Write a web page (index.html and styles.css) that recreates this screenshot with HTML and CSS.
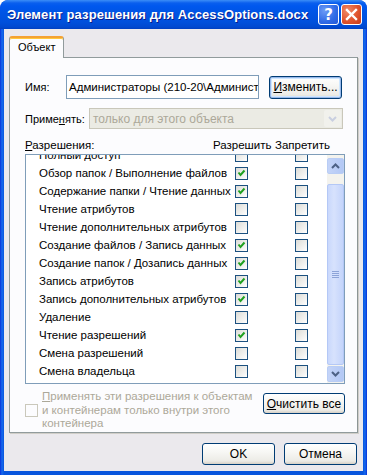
FILE: index.html
```html
<!DOCTYPE html>
<html lang="ru">
<head>
<meta charset="utf-8">
<title>Элемент разрешения</title>
<link rel="stylesheet" href="styles.css">
</head>
<body>
<div class="window">
  <div class="titlebar">
    <span class="title">Элемент разрешения для AccessOptions.docx</span>
    <div class="tb-buttons">
      <span class="tb-btn help">?</span>
      <span class="tb-btn close"><svg width="13" height="13" viewBox="0 0 13 13"><path d="M2 2 L11 11 M11 2 L2 11" stroke="#fff" stroke-width="2.4" stroke-linecap="square"/></svg></span>
    </div>
  </div>
  <div class="client">
    <div class="tabs"><div class="tab">Объект</div></div>
    <div class="panel">
      <div class="name-row">
        <span class="lbl lbl-name">Имя:</span>
        <div class="input">Администраторы (210-20\Администраторы)</div>
        <button class="btn btn-default btn-change"><span><u>И</u>зменить...</span></button>
      </div>
      <div class="apply-row">
        <span class="lbl lbl-apply">Приме<u>н</u>ять:</span>
        <div class="combo">
          <span class="combo-text">только для этого объекта</span>
          <span class="combo-btn"><svg width="9" height="6" viewBox="0 0 9 6"><path d="M1 1 L4.5 4.5 L8 1" fill="none" stroke="#c9cfe0" stroke-width="2"/></svg></span>
        </div>
      </div>
      <div class="perm-head">
        <span class="ph-label"><u>Р</u>азрешения:</span>
        <span class="ph-allow">Разрешить</span>
        <span class="ph-deny">Запретить</span>
      </div>
      <div class="list">
        <div class="list-view">
          <div class="list-items">
            <div class="item"><span class="name">Полный доступ</span><span class="cb"></span><span class="cb"></span></div>
            <div class="item"><span class="name">Обзор папок / Выполнение файлов</span><span class="cb on"></span><span class="cb"></span></div>
            <div class="item"><span class="name">Содержание папки / Чтение данных</span><span class="cb on"></span><span class="cb"></span></div>
            <div class="item"><span class="name">Чтение атрибутов</span><span class="cb"></span><span class="cb"></span></div>
            <div class="item"><span class="name">Чтение дополнительных атрибутов</span><span class="cb"></span><span class="cb"></span></div>
            <div class="item"><span class="name">Создание файлов / Запись данных</span><span class="cb on"></span><span class="cb"></span></div>
            <div class="item"><span class="name">Создание папок / Дозапись данных</span><span class="cb on"></span><span class="cb"></span></div>
            <div class="item"><span class="name">Запись атрибутов</span><span class="cb on"></span><span class="cb"></span></div>
            <div class="item"><span class="name">Запись дополнительных атрибутов</span><span class="cb on"></span><span class="cb"></span></div>
            <div class="item"><span class="name">Удаление</span><span class="cb"></span><span class="cb"></span></div>
            <div class="item"><span class="name">Чтение разрешений</span><span class="cb on"></span><span class="cb"></span></div>
            <div class="item"><span class="name">Смена разрешений</span><span class="cb"></span><span class="cb"></span></div>
            <div class="item"><span class="name">Смена владельца</span><span class="cb"></span><span class="cb"></span></div>
          </div>
        </div>
        <div class="vscroll">
          <span class="sb-btn"><svg width="9" height="6" viewBox="0 0 9 6"><path d="M1 5 L4.5 1.5 L8 5" fill="none" stroke="#4d6185" stroke-width="2"/></svg></span>
          <div class="sb-track">
            <div class="sb-thumb"><span class="grip"></span></div>
          </div>
          <span class="sb-btn"><svg width="9" height="6" viewBox="0 0 9 6"><path d="M1 1 L4.5 4.5 L8 1" fill="none" stroke="#4d6185" stroke-width="2"/></svg></span>
        </div>
      </div>
      <div class="bottom">
        <div class="inherit">
          <span class="cb disabled"></span>
          <span class="inherit-text"><u>П</u>рименять эти разрешения к объектам и контейнерам только внутри этого контейнера</span>
        </div>
        <button class="btn btn-clear"><span><u>О</u>чистить все</span></button>
      </div>
    </div>
    <div class="actions">
      <button class="btn btn-act">OK</button>
      <button class="btn btn-act">Отмена</button>
    </div>
  </div>
</div>
</body>
</html>
```

FILE: styles.css
```css
* { box-sizing: border-box; }
html, body { margin: 0; padding: 0; background: #fff; }
body {
  font-family: "Liberation Sans", Arial, sans-serif;
  font-size: 11px;
  color: #000;
}
u { text-decoration: underline; text-underline-offset: 1px; }

.window {
  width: 367px;
  height: 475px;
  display: flex;
  flex-direction: column;
  background: linear-gradient(to right, #0831d9 0, #166aee 2px, #0855dd 4px, #0855dd calc(100% - 4px), #166aee calc(100% - 2px), #0831d9 100%);
  border-radius: 8px 8px 0 0;
  overflow: hidden;
}

.titlebar {
  height: 29px;
  flex: none;
  display: flex;
  align-items: center;
  justify-content: space-between;
  padding: 0 5px 1px 7px;
  background: linear-gradient(to bottom, #3c8ef7 0, #0a5fee 3px, #0058ee 6px, #0054e3 14px, #0050dc 22px, #0049d0 27px, #003fc0 29px);
  border-radius: 8px 8px 0 0;
}
.title {
  color: #fff;
  font-weight: bold;
  font-size: 13px;
  letter-spacing: 0.1px;
  text-shadow: 1px 1px 0 #0a1e8c;
  white-space: nowrap;
}
.tb-buttons { display: flex; gap: 2px; margin-top: 1px; }
.tb-btn {
  width: 21px;
  height: 21px;
  border: 1px solid #fff;
  border-radius: 3px;
  display: flex;
  align-items: center;
  justify-content: center;
  color: #fff;
  font-weight: bold;
  font-size: 15px;
  font-family: "DejaVu Sans", sans-serif;
}
.help {
  background: radial-gradient(circle at 30% 30%, #6c9cf6 0, #2f6ae6 60%, #2459d8 100%);
}
.close {
  background: radial-gradient(circle at 30% 30%, #f08a68 0, #e0542e 55%, #c5391a 100%);
}

.client {
  flex: 1;
  margin: 0 4px 4px 4px;
  background: #ebe9ed;
  padding: 7px 5px 0 5px;
  display: flex;
  flex-direction: column;
}

.tabs { display: flex; height: 22px; position: relative; z-index: 1; margin-bottom: -1px; }
.tab {
  width: 55px;
  height: 22px;
  background: #fcfcfe;
  border: 1px solid #919b9c;
  border-bottom: none;
  border-top: 2px solid #f4a233;
  border-radius: 3px 3px 0 0;
  box-shadow: inset 0 1px 0 #ffc83c;
  padding: 3px 0 0 8px;
}

.panel {
  height: 376px;
  background: #fcfcfe;
  border: 1px solid #919b9c;
  border-right-color: #8c9595;
  box-shadow: 1px 1px 0 #d0cec8;
  padding: 15px 14px 0 15px;
  display: flex;
  flex-direction: column;
}

.name-row {
  display: flex;
  align-items: center;
  height: 28px;
}
.lbl-name { width: 41px; flex: none; }
.input {
  width: 193px;
  flex: none;
  height: 24px;
  border: 1px solid #7f9db9;
  background: #fff;
  padding: 0 2px;
  line-height: 22px;
  font-size: 11.5px;
  white-space: nowrap;
  overflow: hidden;
}
.btn {
  font-family: inherit;
  font-size: 11px;
  color: #000;
  border: 1px solid #003c74;
  border-radius: 3px;
  background: linear-gradient(to bottom, #fff 0, #f7f7f4 40%, #ecebe6 85%, #d6d0c5 100%);
  padding: 0;
  display: flex;
  align-items: center;
  justify-content: center;
}
.btn-default {
  box-shadow: inset 0 0 0 1px #98b8ea, inset 0 0 0 2px #cee7ff;
}
.btn-change {
  margin-left: 10px;
  width: 73px;
  flex: none;
  height: 23px;
  font-size: 12px;
}

.apply-row {
  display: flex;
  align-items: center;
  height: 21px;
  margin-top: 7px;
}
.lbl-apply { width: 64px; flex: none; }
.combo {
  width: 255px;
  height: 21px;
  border: 1px solid #c9c7ba;
  background: #ebebe4;
  display: flex;
  align-items: center;
  justify-content: space-between;
  padding: 1px 1px 1px 3px;
}
.combo-text { color: #aca899; font-size: 12px; }
.combo-btn {
  width: 17px;
  height: 17px;
  border-radius: 2px;
  background: #f1f1ec;
  display: flex;
  align-items: center;
  justify-content: center;
}

.perm-head {
  display: flex;
  margin-top: 9px;
  height: 14px;
  line-height: 14px;
  font-size: 11.5px;
  white-space: nowrap;
}
.ph-label { width: 188px; flex: none; }
.ph-allow { width: 62px; flex: none; }
.ph-deny { flex: none; }

.list {
  margin-top: 2px;
  width: 320px;
  height: 230px;
  border: 1px solid #7f9db9;
  background: #fff;
  display: flex;
}
.list-view {
  flex: 1;
  overflow: hidden;
}
.list-items { margin-top: -9px; }
.item {
  display: grid;
  grid-template-columns: 209px 60px auto;
  align-items: center;
  height: 18px;
  font-size: 11.5px;
}
.item .name { padding-left: 13px; white-space: nowrap; }

.cb {
  width: 13px;
  height: 13px;
  border: 1px solid #1c5180;
  background: linear-gradient(135deg, #dcdcd7 0, #f4f4f2 70%, #fff 100%);
  display: block;
  flex: none;
}
.cb.on {
  background-image: url("data:image/svg+xml;utf8,<svg xmlns='http://www.w3.org/2000/svg' width='11' height='11' viewBox='0 0 11 11'><path d='M2.5 4.5 L4.5 7 L8.5 2.5' fill='none' stroke='%2321a121' stroke-width='2'/></svg>"), linear-gradient(135deg, #dcdcd7 0, #f4f4f2 70%, #fff 100%);
  background-repeat: no-repeat;
}
.cb.disabled {
  border-color: #cac8bb;
  background: #fcfcfe;
}

.vscroll {
  width: 17px;
  flex: none;
  background: #f4f3ee;
  display: flex;
  flex-direction: column;
  padding: 3px 0 1px 0;
}
.sb-btn {
  height: 16px;
  flex: none;
  border: 1px solid #b9cdf5;
  border-radius: 2px;
  background: linear-gradient(to right, #c4d4f8, #b3c8f5);
  display: flex;
  align-items: center;
  justify-content: center;
}
.sb-track {
  flex: 1;
  padding: 10px 0 1px 0;
  display: flex;
}
.sb-thumb {
  flex: 1;
  border: 1px solid #b4c8f6;
  border-radius: 2px;
  background: linear-gradient(to right, #c9d8fc 0, #d7e2fd 40%, #c4d4fb 100%);
  display: flex;
  align-items: center;
  justify-content: center;
}
.grip {
  width: 7px;
  height: 7px;
  background: repeating-linear-gradient(to bottom, #8ca3d8 0, #8ca3d8 1px, transparent 1px, transparent 2px);
}

.bottom {
  display: flex;
  justify-content: space-between;
  align-items: flex-start;
  margin-top: 6px;
  width: 320px;
}
.inherit {
  display: flex;
  align-items: center;
  width: 232px;
}
.inherit-text {
  color: #aca899;
  margin-left: 4px;
  font-size: 11.5px;
  line-height: 13.5px;
  width: 214px;
  flex: none;
}
.btn-clear {
  margin-top: 3px;
  width: 82px;
  height: 21px;
  font-size: 12px;
}

.actions {
  display: flex;
  justify-content: flex-end;
  gap: 9px;
  padding: 10px 1px 0 0;
}
.btn-act {
  width: 73px;
  height: 22px;
  font-size: 12px;
}
```
